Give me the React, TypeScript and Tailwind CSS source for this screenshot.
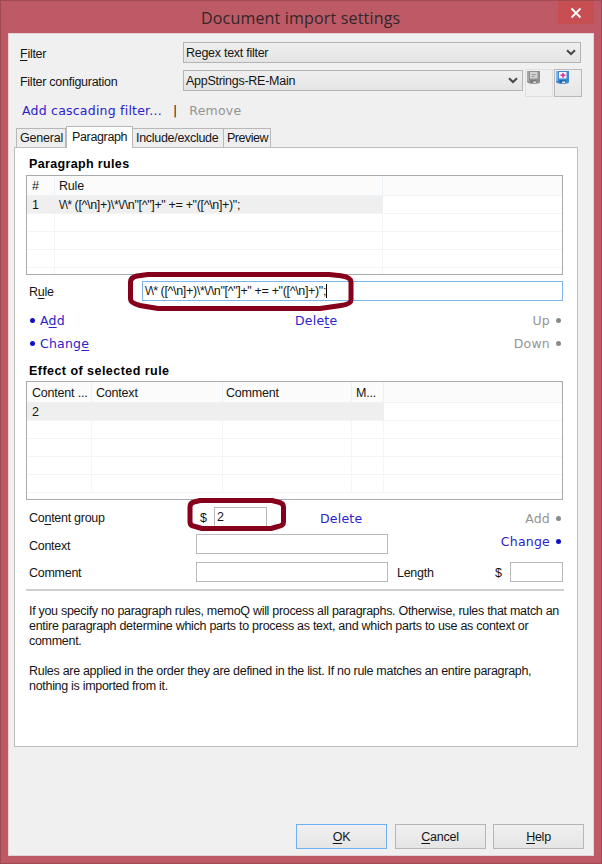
import type { ReactNode } from "react";

const blue = "text-[#2c22cc]";
const gray = "text-[#949494]";

function U({ children }: { children: ReactNode }) {
  return <span className="underline decoration-1 underline-offset-2">{children}</span>;
}

function Link({ children, className = "" }: { children: ReactNode; className?: string }) {
  return (
    <span className={`font-['DejaVu_Sans',sans-serif] text-[12.5px] tracking-[0.22px] whitespace-pre ${className}`}>{children}</span>
  );
}

function Dot({ className = "" }: { className?: string }) {
  return <span className={`size-[5px] shrink-0 rounded-full ${className}`} />;
}

function Combo({ text, className }: { text: string; className: string }) {
  return (
    <div className={`flex h-[21px] items-center justify-between border border-[#b4b4b4] bg-linear-to-b from-[#efefef] to-[#e4e4e4] pr-[4px] pl-[2px] ${className}`}>
      <span className="pt-[2px]">{text}</span>
      <svg width="10" height="7" viewBox="0 0 10 7" fill="none" stroke="#484848" strokeWidth="2">
        <path d="M1 1.200 5 5 9 1.200" />
      </svg>
    </div>
  );
}

function Disk({ on }: { on: boolean }) {
  return (
    <svg width="13" height="13" viewBox="0 0 13 13">
      <path d="M0 0h13v11.500l-1.500 1H2L0 11z" fill={on ? "#3f87ce" : "#909090"} />
      <path d="M0 0h2v10H0z" fill={on ? "#7fb6e6" : "#a9a9a9"} />
      <rect x="3" y="1" width="7.500" height="6.500" fill={on ? "#f8f4fb" : "#d2d2d2"} />
      {on ? (
        <path d="M4.500 4.300h5M7 2v4.700" stroke="#e0308c" strokeWidth="1.600" />
      ) : (
        <path d="M4.500 3.500h4.500M4.500 5.500h3" stroke="#a0a0a0" strokeWidth="1" />
      )}
      <rect x="3.500" y="9" width="6" height="3.500" fill={on ? "#2468ad" : "#7b7b7b"} />
      <path d="M6.500 10.500h2.500V12H6z" fill={on ? "#f3f8fc" : "#dcdcdc"} />
    </svg>
  );
}

function Grid({ cols, header, row, heightClass, headerClass }: { cols: string[]; header: string[]; row: ReactNode[]; heightClass: string; headerClass: string }) {
  return (
    <div className={`ml-[11px] w-[537px] shrink-0 overflow-hidden border border-[#a9a9b0] bg-white ${heightClass}`}>
      <div className={`flex border-b border-[#edf3f7] bg-[#fbfbfb] ${headerClass}`}>
        {cols.map((c, i) => (
          <div key={i} className={`flex shrink-0 items-center border-r border-[#eaf2f8] pt-[2px] tracking-[-0.2px] whitespace-pre ${c}`}>{header[i]}</div>
        ))}
      </div>
      {[0, 1, 2, 3, 4].map((r) => (
        <div key={r} className="flex h-[18px] border-b border-[#f4f4f4]">
          {cols.map((c, i) => (
            <div key={i} className={`flex shrink-0 items-center border-r pt-px whitespace-pre ${r === 0 ? "border-[#efefef] bg-[#efefef]" : "border-[#f5f5f5]"} ${c}`}>
              {r === 0 ? row[i] : ""}
            </div>
          ))}
        </div>
      ))}
    </div>
  );
}

function Button({ hot, children }: { hot?: boolean; children: ReactNode }) {
  return (
    <div className={`flex h-[25px] w-[91px] items-center justify-center border bg-linear-to-b from-[#f0f0f0] to-[#e5e5e5] ${hot ? "border-[#6cb0f5]" : "border-[#b6b6b6]"}`}>
      <span className="pt-px">{children}</span>
    </div>
  );
}

const rule = '\\/\\* ([^\\n]+)\\*\\/\\n"[^"]+" += +"([^\\n]+)";';

function Pattern() {
  return (
    <span>
      <span className="tracking-[-0.7px]">{rule.slice(0, 4)}</span>
      <span className="tracking-[-0.34px]">{rule.slice(4)}</span>
    </span>
  );
}

export default function App() {
  return (
    <div className="relative flex h-[864px] w-[602px] flex-col border border-[#a04a54] bg-[#bd5a65] px-[7px] font-['Liberation_Sans',Arial,sans-serif] text-[12.5px] leading-[15px] tracking-[-0.27px] text-[#151515]">
      <div className="flex h-[32px] shrink-0 items-start">
        <div className="mt-[5px] ml-[193px] w-[240px] font-['Open_Sans',sans-serif] text-[16px] leading-[24px] tracking-[0.18px] whitespace-pre text-[#33262a]">Document import settings</div>
        <div className="ml-auto flex h-[23px] w-[36px] items-center justify-center bg-[#c84f51]">
          <svg width="12" height="12" viewBox="0 0 12 12" stroke="#fff" strokeWidth="1.800">
            <path d="M1.500 1.500l9 9M10.500 1.500l-9 9" />
          </svg>
        </div>
      </div>
      <div className="flex h-[823px] flex-col border border-[#e6d3d5] bg-[#f0f0f0] pl-[5px]">
        <div className="mt-[8px] flex items-center">
          <span className="ml-[6px] w-[163px] pt-[3px]"><U>F</U>ilter</span>
          <Combo text="Regex text filter" className="w-[398px]" />
        </div>
        <div className="mt-[6px] flex h-[28px] items-start">
          <span className="mt-[6px] ml-[6px] w-[163px]">Filter configuration</span>
          <Combo text="AppStrings-RE-Main" className="mt-px w-[340px]" />
          <div className="ml-[2px] h-[28px] w-[28px] border border-[#e0e0e0] p-[1px]"><Disk on={false} /></div>
          <div className="ml-px h-[28px] w-[28px] border border-[#b9b9b9] bg-linear-to-b from-[#f0f0f0] to-[#e6e6e6] p-[1px]"><Disk on /></div>
        </div>
        <div className="mt-[5px] flex h-[16px] items-center">
          <Link className={`ml-[8px] ${blue}`}>Add cascading filter...</Link>
          <Link className="ml-[11px] text-[#222]">|</Link>
          <Link className={`ml-[12px] ${gray}`}>Remove</Link>
        </div>
        <div className="mt-[8px] flex h-[21px] items-end pl-[2px]">
          <div className="flex h-[19px] w-[50px] items-center border border-b-0 border-[#b8b8b8] bg-[#eee] pl-[3px] tracking-[-0.2px]">General</div>
          <div className="relative -mb-px flex h-[22px] w-[67px] items-center border border-b-0 border-[#b8b8b8] bg-white pb-[1px] pl-[5px] tracking-[-0.35px]">Paragraph</div>
          <div className="flex h-[19px] w-[90px] items-center border-t border-[#b8b8b8] bg-[#eee] pl-[3px] tracking-[-0.3px] whitespace-pre">Include/exclude</div>
          <div className="flex h-[19px] w-[48px] items-center border border-b-0 border-[#b8b8b8] bg-[#eee] pl-[3px] tracking-[-0.5px]">Preview</div>
        </div>
        <div className="flex h-[600px] w-[564px] flex-col border border-[#bebebe] bg-white">
          <div className="mt-[9px] ml-[14px] text-[12.5px] font-bold tracking-[0.35px] text-black">Paragraph rules</div>
          <div className="h-[3px]" />
          <Grid cols={["w-[28px] pl-[5px]", "w-[328px] pl-[4px]"]} header={["#", "Rule"]} row={["1", <Pattern key="p" />]} heightClass="h-[100px]" headerClass="h-[20px]" />
          <div className="mt-[6px] flex h-[20px] items-center">
            <span className="mt-[3px] ml-[14px] w-[113px]">R<U>u</U>le</span>
            <div className="flex h-[20px] w-[421px] items-center border border-[#7db5e6] pl-[2px] whitespace-pre">
              <Pattern /><span className="h-[14px] w-px bg-black" />
            </div>
          </div>
          <div className="mt-[8px] flex h-[23px] items-center pl-[15px]">
            <Dot className="bg-[#1212c4]" />
            <Link className={`ml-[5px] w-[255px] ${blue}`}>A<U>d</U>d</Link>
            <Link className={blue}>Dele<U>t</U>e</Link>
            <Link className={`ml-auto ${gray}`}>Up</Link>
            <Dot className="mr-[16px] ml-[6px] bg-[#8a8a8a]" />
          </div>
          <div className="flex h-[23px] items-center pl-[15px]">
            <Dot className="bg-[#1212c4]" />
            <Link className={`ml-[5px] ${blue}`}>Chang<U>e</U></Link>
            <Link className={`ml-auto ${gray}`}>Down</Link>
            <Dot className="mr-[16px] ml-[6px] bg-[#8a8a8a]" />
          </div>
          <div className="mt-[9px] ml-[14px] text-[12.5px] font-bold tracking-[0.46px] text-black">Effect of selected rule</div>
          <div className="h-[2px]" />
          <Grid cols={["w-[65px] pl-[5px]", "w-[131px] pl-[4px]", "w-[129px] pl-[3px]", "w-[32px] pl-[4px]"]} header={["Content ...", "Context", "Comment", "M..."]} row={["2", "", "", ""]} heightClass="h-[119px]" headerClass="h-[21px]" />
          <div className="mt-[7px] flex h-[20px] items-center">
            <span className="mt-[3px] ml-[14px] w-[171px]">Co<U>n</U>tent group</span>
            <span className="mt-[2px] w-[14px]">$</span>
            <div className="flex h-[20px] w-[53px] items-center border border-[#b9b9bd] pl-[2px]">2</div>
            <Link className={`mt-[3px] ml-[53px] ${blue}`}>Delete</Link>
            <Link className={`mt-[3px] ml-auto ${gray}`}>Add</Link>
            <Dot className="mt-[3px] mr-[16px] ml-[6px] bg-[#8a8a8a]" />
          </div>
          <div className="mt-[7px] flex h-[20px] items-center">
            <span className="mt-[4px] ml-[14px] w-[167px]">Context</span>
            <div className="h-[20px] w-[192px] border border-[#b9b9bd]" />
            <Link className={`-mt-[6px] ml-auto ${blue}`}>Change</Link>
            <Dot className="-mt-[6px] mr-[16px] ml-[6px] bg-[#1212c4]" />
          </div>
          <div className="mt-[8px] flex h-[20px] items-center">
            <span className="mt-[3px] ml-[14px] w-[167px]">Comment</span>
            <div className="h-[20px] w-[192px] border border-[#b9b9bd]" />
            <span className="mt-[3px] ml-[9px] w-[98px]">Length</span>
            <span className="mt-[3px] w-[15px]">$</span>
            <div className="h-[20px] w-[53px] border border-[#b9b9bd]" />
          </div>
          <div className="mt-[7px] ml-[11px] h-[2px] w-[538px] shrink-0 bg-[#cfcfcf]" />
          <div className="mt-[13px] ml-[14px] tracking-[-0.3px] whitespace-pre">
            <p>If you specify no paragraph rules, memoQ will process all paragraphs. Otherwise, rules that match an</p>
            <p className="tracking-[-0.28px]">entire paragraph determine which parts to process as text, and which parts to use as context or</p>
            <p>comment.</p>
            <p className="mt-[15px]">Rules are applied in the order they are defined in the list. If no rule matches an entire paragraph,</p>
            <p>nothing is imported from it.</p>
          </div>
        </div>
        <div className="mt-[77px] mr-[9px] flex justify-end gap-[7.500px]">
          <Button hot><U>O</U>K</Button>
          <Button><U>C</U>ancel</Button>
          <Button><U>H</U>elp</Button>
        </div>
      </div>
      <svg className="pointer-events-none absolute -top-px -left-px" width="602" height="864" fill="none" stroke="#86001c" strokeWidth="5" strokeLinejoin="round">
        <path d="M148 274.500H329L341 275.800Q351 277.500 351 282V300Q351 304 341 305.500L320 308.500H158L140 305.500Q130.500 303 130.500 299V282Q130.500 277.500 137 276Z" />
        <path d="M200 500.500H272L278 502Q283.500 503 283.500 507V522Q283.500 525.500 278 526.500L271 528.500H202L195 526.500Q190 526 190 522V507Q190 503 194 502Z" />
      </svg>
    </div>
  );
}
